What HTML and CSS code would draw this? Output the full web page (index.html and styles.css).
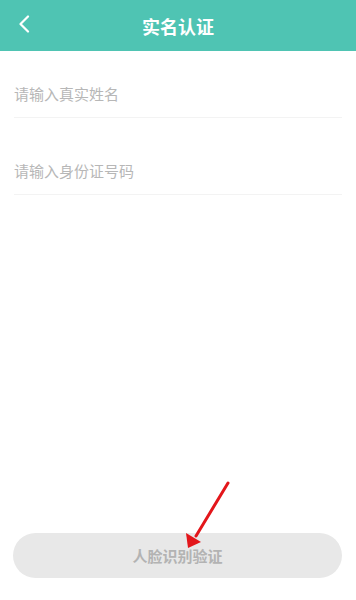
FILE: index.html
```html
<!DOCTYPE html>
<html lang="zh-CN">

<head>
  <meta charset="UTF-8">
  <meta name="viewport" content="width=device-width, initial-scale=1.0">
  <title>实名认证</title>

  <link rel="stylesheet" href="styles.css">

</head>

<body>
  <div class="page">
    <header class="nav-bar">
      <a class="back-btn" href="#">
        <svg width="12" height="18" viewBox="0 0 12 18">
          <path d="M10 1.5 L2.5 9 L10 16.5" fill="none" stroke="#fff" stroke-width="2.2" stroke-linecap="round" stroke-linejoin="round" />
        </svg>
      </a>
      <h1 class="nav-title">实名认证</h1>
    </header>

    <form class="auth-form" id="authForm">
      <div class="field">
        <input type="text" id="realName" placeholder="请输入真实姓名">
      </div>
      <div class="field">
        <input type="text" id="idNumber" placeholder="请输入身份证号码">
      </div>
    </form>

    <button type="button" class="face-btn" id="faceBtn" disabled>人脸识别验证</button>

    <!-- red pointer arrow drawn over the button -->
    <svg class="pointer" width="356" height="600" viewBox="0 0 356 600">
      <line x1="228" y1="483" x2="196" y2="536" stroke="#e3161b" stroke-width="3" stroke-linecap="round" />
      <polygon points="188,548 186,533 201,542" fill="#e3161b" />
    </svg>
  </div>
</body>

</html>
```

FILE: styles.css
```css
body {
  margin: 0;
  padding: 0;
  background-color: #fff;
  font-family: "Noto Sans CJK SC", "Noto Sans", sans-serif;
}

.page {
  position: relative;
  height: 600px;
  display: flex;
  flex-direction: column;
}

.nav-bar {
  height: 51px;
  background-color: #4fc4b3;
  display: flex;
  align-items: center;
  justify-content: center;
  position: relative;
}

.back-btn {
  position: absolute;
  left: 18px;
  top: 15px;
  display: flex;
}

.nav-title {
  margin: 0;
  color: #fff;
  font-size: 18px;
  font-weight: bold;
  line-height: 1;
}

.auth-form {
  padding: 18px 14px 0;
  display: flex;
  flex-direction: column;
  gap: 28px;
}

.field {
  border-bottom: 1px solid #f3f3f3;
}

.field input {
  display: block;
  width: 100%;
  height: 48px;
  box-sizing: border-box;
  border: none;
  outline: none;
  padding: 0;
  font-family: inherit;
  font-size: 15px;
  color: #333;
  background: transparent;
}

.field input::placeholder {
  color: #b7b7b7;
}

.face-btn {
  margin: auto 14px 22px 13px;
  height: 45px;
  border: none;
  border-radius: 23px;
  background-color: #e8e8e8;
  color: #b3b3b3;
  font-family: inherit;
  font-size: 15px;
  font-weight: bold;
  padding: 0;
}

.pointer {
  position: absolute;
  left: 0;
  top: 0;
  pointer-events: none;
}
```
